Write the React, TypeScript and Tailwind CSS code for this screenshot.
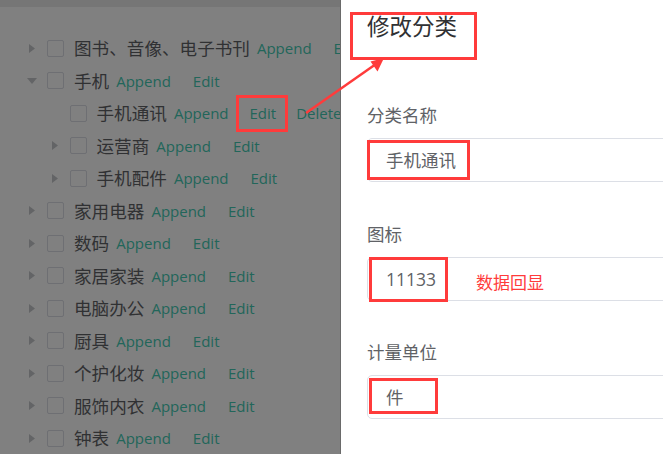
import React from "react";

type Row = {
  label: string;
  level: 1 | 2;
  caret: "right" | "down" | "none";
  editBox?: boolean;
  del?: boolean;
};

const rows: Row[] = [
  { label: "图书、音像、电子书刊", level: 1, caret: "right" },
  { label: "手机", level: 1, caret: "down" },
  { label: "手机通讯", level: 2, caret: "none", editBox: true, del: true },
  { label: "运营商", level: 2, caret: "right" },
  { label: "手机配件", level: 2, caret: "right" },
  { label: "家用电器", level: 1, caret: "right" },
  { label: "数码", level: 1, caret: "right" },
  { label: "家居家装", level: 1, caret: "right" },
  { label: "电脑办公", level: 1, caret: "right" },
  { label: "厨具", level: 1, caret: "right" },
  { label: "个护化妆", level: 1, caret: "right" },
  { label: "服饰内衣", level: 1, caret: "right" },
  { label: "钟表", level: 1, caret: "right" },
];

const font = { fontFamily: '"Open Sans", "Noto Sans CJK SC", sans-serif' };

function Caret({ dir }: { dir: Row["caret"] }) {
  return (
    <span className="flex w-[18px] h-full items-center justify-center shrink-0">
      {dir === "right" && (
        <svg width="6" height="9" viewBox="0 0 6 9">
          <path d="M0 0 L6 4.5 L0 9 Z" fill="#636466" />
        </svg>
      )}
      {dir === "down" && (
        <svg width="10" height="6" viewBox="0 0 10 6">
          <path d="M0 0 L10 0 L5 6 Z" fill="#636466" />
        </svg>
      )}
    </span>
  );
}

function TreeRow({ r }: { r: Row }) {
  return (
    <div
      className={`flex h-[32.5px] items-center whitespace-nowrap ${
        r.level === 1 ? "pl-[23px]" : "pl-[45.5px]"
      }`}
    >
      <Caret dir={r.caret} />
      <span className="ml-[6px] w-[17px] h-[17px] shrink-0 rounded-[2px] border border-[#6e6f73] bg-[#808080]" />
      <span className="ml-[10px] text-[17.6px] leading-[24px] text-[#303133]">{r.label}</span>
      <span className="ml-[7px] text-[15px] leading-[24px] text-[#22665a]">Append</span>
      {r.editBox ? (
        <span className="ml-[7px] -my-[3px] flex h-[37px] items-center border-[3px] border-[#ff3b3b] pl-[11px] pr-[9px] text-[15px] leading-[24px] text-[#22665a]">
          Edit
        </span>
      ) : (
        <span className="ml-[22px] text-[15px] leading-[24px] text-[#22665a]">Edit</span>
      )}
      {r.del && (
        <span className="ml-[8px] text-[15px] leading-[24px] text-[#22665a]">Delete</span>
      )}
    </div>
  );
}

function Field({
  label,
  value,
  box,
  note,
  mb,
}: {
  label: string;
  value: string;
  box: string;
  note?: string;
  mb: string;
}) {
  return (
    <div className={mb}>
      <div className="h-[24px] text-[17.5px] leading-[24px] text-[#606266] whitespace-nowrap">{label}</div>
      <div className="relative mt-[11px] flex h-[44px] w-[420px] items-center rounded-[5px] border border-[#dcdfe6] pl-[18px] text-[17.5px] leading-[24px] text-[#606266]">
        <span>{value}</span>
        <span className={`absolute border-[3px] border-[#ff3b3b] ${box}`} />
        {note && (
          <span className="absolute left-[108px] top-[13px] text-[17px] leading-[24px] text-[#ff3b3b] whitespace-nowrap">
            {note}
          </span>
        )}
      </div>
    </div>
  );
}

export default function App() {
  return (
    <div className="relative flex h-[454px] w-[663px] overflow-hidden bg-white" style={font}>
      <div className="flex w-[341px] shrink-0 flex-col overflow-hidden border-r border-[#6a6a6a] bg-[#808080]">
        <div className="h-[7px] shrink-0 bg-[#767676]" />
        <div className="pt-[25px]">
          {rows.map((r) => (
            <TreeRow key={r.label} r={r} />
          ))}
        </div>
      </div>
      <div className="flex-1 overflow-hidden bg-white px-[26px]">
        <div className="-ml-[17px] mt-[12px] h-[48px] w-[127px] border-[3px] border-[#ff3b3b] pl-[14px]">
          <div className="text-[22.5px] leading-[24px] text-[#303133] whitespace-nowrap">修改分类</div>
        </div>
        <div className="mt-[43px]">
          <Field label="分类名称" value="手机通讯" box="-left-px top-[1px] w-[103px] h-[40px]" mb="mb-[39.5px]" />
          <Field
            label="图标"
            value="11133"
            box="left-[1px] -top-px w-[79px] h-[45px]"
            note="数据回显"
            mb="mb-[39.5px]"
          />
          <Field label="计量单位" value="件" box="left-[1px] top-[2px] w-[69px] h-[36px]" mb="" />
        </div>
      </div>
      <svg className="pointer-events-none absolute left-0 top-0" width="663" height="454">
        <line x1="306" y1="113" x2="376" y2="64" stroke="#ff3b3b" strokeWidth="2.5" />
        <path d="M384 58 L370.5 61.5 L377.5 71.5 Z" fill="#ff3b3b" />
      </svg>
    </div>
  );
}
